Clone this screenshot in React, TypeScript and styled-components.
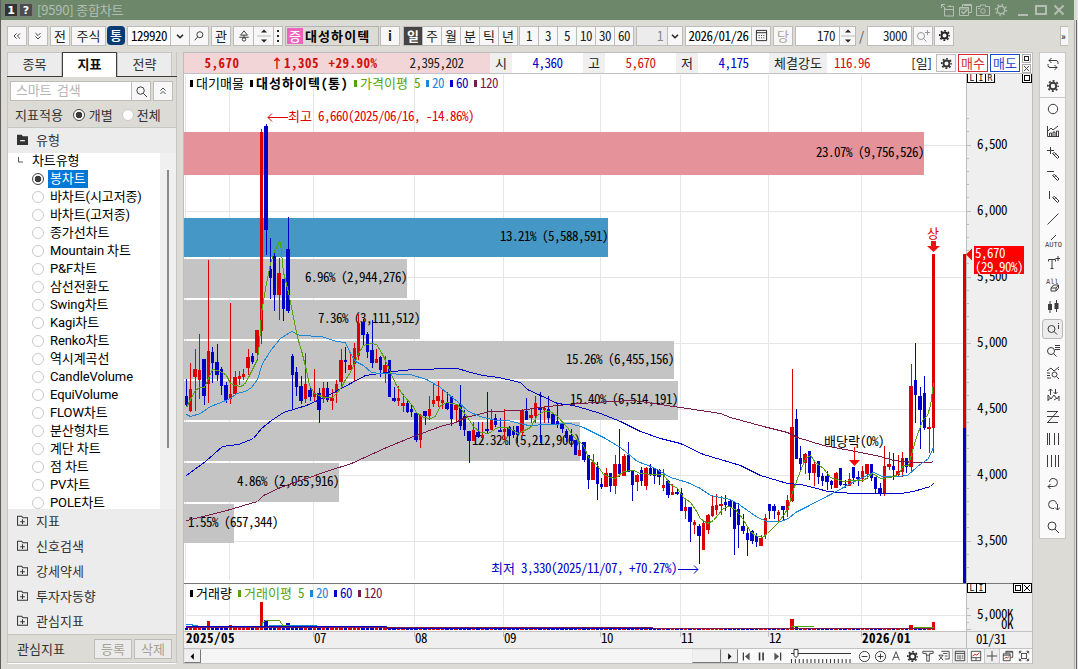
import React from "react";
import styled, { createGlobalStyle, css } from "styled-components";

const RED = "#dd0000";
const BLUE = "#0000c8";
const GREEN = "#55a20a";
const SKY = "#1c86d8";
const WINE = "#7a1a4c";

const GlobalStyle = createGlobalStyle`
    * {
        box-sizing: border-box;
    }
    body {
        margin: 0;
        overflow: hidden;
        font-family: "Noto Sans CJK KR", "Liberation Sans", sans-serif;
        font-size: 13px;
        line-height: 1;
        color: #000;
    }
`;

const Window = styled.div`
    display: flex;
    flex-direction: column;
    width: 1078px;
    height: 669px;
    background: #dcdbd6;
    border-left: 1px solid #5e5e5e;
    border-right: 1px solid #e6e6ea;
`;

const TitleBar = styled.div`
    display: flex;
    align-items: center;
    height: 20px;
    flex: none;
    margin-right: 3px;
    padding: 0 8px 0 3px;
    background: #6c8769;
    color: #b5beb2;
`;

const TitleBox = styled.div<{ $dark?: boolean }>`
    display: flex;
    align-items: center;
    justify-content: center;
    width: 14px;
    height: 14px;
    margin-right: 1px;
    background: ${p => (p.$dark ? "#333" : "#4c4c4c")};
    border: 1px solid #7d7d7d;
    color: #fff;
    font: bold 11px "DejaVu Sans", sans-serif;
`;

const Title = styled.div`
    flex: 1;
    margin: -2px 0 0 3px;
    letter-spacing: -0.2px;
    white-space: nowrap;
`;

const TitleIcons = styled.div`
    display: flex;
    align-items: center;
    gap: 4px;
    margin-left: 8px;
`;

const Toolbar = styled.div`
    display: flex;
    flex: none;
    height: 32px;
    padding: 6px 9px 0 6px;
`;

const Group = styled.div<{ $gap?: number }>`
    display: flex;
    flex: none;
    height: 20px;
    margin-right: ${p => p.$gap ?? 2}px;
    border: 1px solid #bdbcb9;
    background: #f7f7f7;
`;

const Cell = styled.div<{ $w: number; $bg?: string; $color?: string; $right?: boolean; $line?: boolean }>`
    display: flex;
    flex: none;
    align-items: center;
    justify-content: ${p => (p.$right ? "flex-end" : "center")};
    width: ${p => p.$w}px;
    padding: 0 ${p => (p.$right ? 4 : 0)}px 1px 0;
    background: ${p => p.$bg ?? "transparent"};
    color: ${p => p.$color ?? "#222"};
    border-left: ${p => (p.$line ? "1px solid #bdbcb9" : "0")};
    white-space: nowrap;
    overflow: hidden;
`;

const Digits = styled.span<{ $bold?: boolean }>`
    font-size: 13px;
    font-weight: ${p => (p.$bold ? 700 : 400)};
    font-feature-settings: "hwid";
    letter-spacing: ${p => (p.$bold ? 0.5 : -0.5)}px;
`;

const UnifiedButton = styled.div`
    flex: none;
    width: 18px;
    height: 19px;
    margin-right: 2px;
    border-radius: 4px;
    background: #063b73;
    color: #fff;
    font-weight: 500;
    line-height: 18px;
    text-align: center;
`;

const StockName = styled.div`
    display: flex;
    flex: none;
    align-items: center;
    width: 94px;
    height: 20px;
    margin: 0 1px 0 2px;
    padding: 0 0 1px 1px;
    border: 1px solid #b3b2ae;
    background: #dcdbd6;
    font-weight: 700;
    letter-spacing: 1.1px;
    white-space: nowrap;
`;

const MarginMark = styled.span`
    width: 16px;
    margin-right: 2px;
    background: #ef62bd;
    color: #fff;
    font-weight: 500;
    letter-spacing: 0;
    line-height: 16px;
    text-align: center;
`;

const Slash = styled.div`
    width: 11px;
    line-height: 20px;
    text-align: center;
    color: #555;
`;

const MoreTab = styled.div`
    width: 8px;
    height: 20px;
    margin-left: auto;
    border: 1px solid #bdbcb9;
    border-right: 0;
    background: #f7f7f7;
    font-size: 10px;
    line-height: 17px;
`;

const Body = styled.div`
    display: flex;
    flex: 1;
    padding-left: 6px;
    align-items: flex-start;
`;

/* left side panel */

const Side = styled.div`
    width: 170px;
    height: 612px;
    display: flex;
    flex-direction: column;
    margin-right: 6px;
    border-left: 1px solid #c6c6c4;
    border-right: 1px solid #c6c6c4;
    border-bottom: 1px solid #fff;
    color: #333;
`;

const Tabs = styled.div`
    display: flex;
    height: 25px;
    flex: none;
    margin: 0 -1px;
    border-bottom: 1px solid #3d3d3d;
`;

const Tab = styled.div<{ $active?: boolean }>`
    width: 55px;
    height: ${p => (p.$active ? 25 : 24)}px;
    background: ${p => (p.$active ? "#fff" : "#ececec")};
    border: 1px solid #c6c6c4;
    border-bottom: 0;
    line-height: 21px;
    text-align: center;
    ${p => p.$active && css`
        border-color: #3d3d3d;
        font-weight: 700;
        color: #111;
    `}
`;

const SearchRow = styled.div`
    display: flex;
    height: 20px;
    flex: none;
    margin: 4px 2px 0;
`;

const SearchInput = styled.div`
    width: 122px;
    padding-left: 5px;
    border: 1px solid #bdbcb9;
    background: #fff;
    color: #b5b5b5;
    line-height: 16px;
    word-spacing: 3px;
    letter-spacing: -0.2px;
`;

const SquareButton = styled.div<{ $ml?: number }>`
    display: flex;
    align-items: center;
    justify-content: center;
    width: 20px;
    height: 20px;
    margin-left: ${p => p.$ml ?? 0}px;
    border: 1px solid #bdbcb9;
    background: #f7f7f7;
    color: #333;
`;

const QuoteSetup = styled(SquareButton)`
    height: 18px;
    margin: 1px 2px 0 0;
`;

const ApplyRow = styled.div`
    display: flex;
    align-items: center;
    height: 27px;
    flex: none;
    padding: 1px 0 0 7px;
    border-bottom: 1px solid #c6c6c4;
    white-space: nowrap;
`;

const Radio = styled.span<{ $on?: boolean; $ml?: number; $mr?: number }>`
    flex: none;
    width: 12px;
    height: 12px;
    margin: 0 ${p => p.$mr ?? 6}px 0 ${p => p.$ml ?? 0}px;
    border: 1px solid ${p => (p.$on ? "#444" : "#c9c9c9")};
    border-radius: 50%;
    background: ${p => (p.$on ? "radial-gradient(circle, #3a3a3a 3px, #fff 3.6px)" : "#fff")};
`;

const SectionHead = styled.div`
    display: flex;
    align-items: center;
    gap: 8px;
    height: 25px;
    flex: none;
    padding: 0 0 2px 9px;
    background: #ececec;
`;

const ListBox = styled.div`
    display: flex;
    height: 356px;
    flex: none;
    overflow: hidden;
    background: #fff;
    color: #000;
`;

const List = styled.div`
    width: 152px;
`;

const ListItem = styled.div<{ $root?: boolean }>`
    display: flex;
    align-items: center;
    height: 18px;
    padding-left: ${p => (p.$root ? 10 : 24)}px;
    white-space: nowrap;
    &:first-child {
        margin-top: -1px;
    }
`;

const ItemText = styled.span<{ $on?: boolean }>`
    margin-left: -2px;
    padding: 0 2px;
    font-family: Roboto, "Noto Sans CJK KR", sans-serif;
    letter-spacing: -0.1px;
    line-height: 18px;
    background: ${p => (p.$on ? "#0078d7" : "transparent")};
    color: ${p => (p.$on ? "#fff" : "#000")};
`;

const ListScroll = styled.div`
    flex: 1;
    padding: 17px 0 0 7px;
    background: #f0f0f0;
`;

const ListThumb = styled.div`
    width: 2px;
    height: 278px;
    background: #8a8a8a;
`;

const FavoriteRow = styled.div`
    display: flex;
    flex: 1;
    align-items: center;
    padding: 0 4px 0 9px;
    border-top: 1px solid #c6c6c4;
    gap: 2px;
    border-bottom: 1px solid #c6c6c4;
`;

const FavoriteLabel = styled.div`
    flex: 1;
`;

const DisabledButton = styled.div`
    width: 38px;
    height: 20px;
    border: 1px solid #bdbcb9;
    background: #ebebeb;
    color: #a5a294;
    line-height: 18px;
    text-align: center;
`;

/* chart */

const Main = styled.div`
    width: 850px;
    height: 612px;
    display: flex;
    flex-direction: column;
    border: 1px solid #bdbcbf;
    border-bottom-color: #c4c4c4;
    background: #fff;
`;

const QuoteBar = styled.div`
    display: flex;
    height: 21px;
    flex: none;
    border-bottom: 1px solid #c2c2c6;
`;

const Quote = styled(Cell)`
    height: 20px;
    padding-bottom: 2px;
`;

const TradeButton = styled.div<{ $color: string }>`
    width: 30px;
    height: 18px;
    margin: 1px 2px 0 0;
    border: 1px solid ${p => p.$color};
    color: ${p => p.$color};
    background: #fff;
    line-height: 16px;
    text-align: center;
`;

const MiniStack = styled.div`
    display: flex;
    flex-direction: column;
    gap: 1px;
    padding-top: 1px;
    width: 10px;
`;

const Mini = styled.svg`
    width: 9px;
    height: 9px;
    border: 1px solid #aaa;
`;

const ChartSvg = styled.svg`
    display: block;
    flex: none;
    width: 848px;
    height: 575px;
`;

const ChartText = styled.text`
    font-family: "Noto Sans CJK KR", sans-serif;
    font-size: 13px;
    font-feature-settings: "hwid";
`;

const BottomBar = styled.div`
    display: flex;
    flex: 1;
    align-items: center;
    background: #fafafa;
    color: #333;
`;

const ScrollButton = styled.div<{ $w: number }>`
    display: flex;
    align-items: center;
    justify-content: center;
    width: ${p => p.$w}px;
    height: 14px;
    border: 1px solid #e8e8e8;
    border-right-color: #777;
    border-bottom-color: #777;
    background: #f0f0f0;
`;

const ScrollTrack = styled.div`
    display: flex;
    justify-content: flex-end;
    width: 520px;
    height: 14px;
    background: #f5f5f5;
`;

const BottomIcons = styled.div`
    display: flex;
    width: 294px;
    align-items: center;
`;

const IconCell = styled.div<{ $w?: number; $boxed?: boolean }>`
    display: flex;
    flex: none;
    align-items: center;
    justify-content: center;
    width: ${p => p.$w ?? 16}px;
    height: 14px;
    background: ${p => (p.$boxed ? "#eee" : "transparent")};
    border-left: ${p => (p.$boxed ? "1px solid #c4c4c4" : "0")};
    border-right: ${p => (p.$boxed ? "1px solid #c4c4c4" : "0")};
`;

/* right tools */

const Tools = styled.div`
    display: flex;
    flex-direction: column;
    width: 27px;
    height: 487px;
    margin-left: 6px;
    border: 1px solid #c8c8c8;
    background: #fafafa;
    color: #3c3c3c;
`;

const Tool = styled.div<{ $active?: boolean; $last?: boolean }>`
    display: flex;
    align-items: center;
    justify-content: center;
    height: ${p => (p.$active ? 20 : 22)}px;
    margin: ${p => (p.$active ? "1px 2px" : "0")};
    border: ${p => (p.$active ? "1px solid #b8b8b8" : "0")};
    border-radius: ${p => (p.$active ? 3 : 0)}px;
    background: ${p => (p.$active ? "#ececec" : "transparent")};
    ${p => p.$last && css`
        height: 23px;
        border-bottom: 1px solid #c8c8c8;
    `}
`;

const RightEdge = styled.div`
    align-self: stretch;
    width: 3px;
    margin: -32px 0 0 auto;
    border-left: 1px solid #b4b4b4;
    border-right: 1px solid #636363;
    background: #dcdbd6;
`;

const Icon = (props: { size?: number; w?: number; sw?: number; children: React.ReactNode }) => (
    <svg
        width={props.w ?? props.size ?? 14}
        height={props.size ?? 14}
        viewBox={`0 0 ${props.w ?? 14} 14`}
        fill="none"
        stroke="currentColor"
        strokeWidth={props.sw ?? 1}
    >
        {props.children}
    </svg>
);

const Gear = ({ size = 14 }: { size?: number }) => (
    <Icon size={size}>
        <circle cx="7" cy="7" r="3.2" strokeWidth="2" />
        <circle cx="7" cy="7" r="5.1" strokeWidth="1.8" strokeDasharray="2 2.005" strokeDashoffset="1" />
    </Icon>
);

const Lens = ({ size = 14 }: { size?: number }) => (
    <Icon size={size}><circle cx="6" cy="6" r="4" /><path d="M9 9l4 4" /></Icon>
);

const Chevron = () => <Icon size={12} sw={1.8}><path d="M3.500 5.500L7 9l3.500-3.500" /></Icon>;

const Spinner = () => (
    <Icon w={14} size={18}>
        <path d="M-3 7H17" stroke="#bdbcb9" />
        <path d="M4 3.500L7 .5l3 3zM4 10.500l3 3 3-3z" fill="currentColor" stroke="none" />
    </Icon>
);

const pen = "M6.500 7.500l2-1 4.500 4.500-1.500 1.500-4.500-4.500zM8.500 9l1.500-1.500";

const TOOL_ICONS: React.ReactNode[] = [
    <Icon><path d="M5.500 1L3 3.500 5.500 6M3 3.500h7q2 0 2 2v1.500M8.500 8L11 10.500 8.500 13M11 10.500H4q-2 0-2-2V7" /></Icon>,
    <Gear />,
    <Icon><circle cx="7" cy="7" r="4.700" /></Icon>,
    <Icon><path d="M1.500 2v10.500H13M3.500 12V9h2v3M7 12V8h2v4M10.500 12V7h2v5M2 7l3-3 2 2 5-4" /></Icon>,
    <Icon><path d="M1 4.500h7M4.500 1v7" /><path d={pen} /></Icon>,
    <Icon><path d="M1 3.500h7" /><path d={pen} /></Icon>,
    <Icon><path d="M3.500 1v8" /><path d={pen} /></Icon>,
    <Icon><path d="M1.500 12.500l11-11" /></Icon>,
    <Icon w={18}>
        <path d="M7 6l5-5" />
        <text x="1" y="13" fontSize="7" fontFamily="DejaVu Sans Mono" fill="currentColor" stroke="none">AUTO</text>
    </Icon>,
    <Icon><path d="M2.500 5.500v-2h7v2M6 4v8.500M4.500 12.500h3M12 0v5M9.500 2.500h5" /></Icon>,
    <Icon>
        <text x="0" y="5.5" fontSize="7" fontFamily="DejaVu Sans Mono" fill="currentColor" stroke="none">All</text>
        <path d="M5 10l2.500-3h5L10 10zM5 10v3h5v-3M10 13l2.500-3V7" />
    </Icon>,
    <Icon><path d="M4 1v12M10.500 0v12" /><path d="M2 4h4v6H2zM8.500 3h4v6h-4z" fill="currentColor" stroke="none" /></Icon>,
    <Icon><circle cx="5.500" cy="7" r="3.500" /><path d="M8 9.500l3 3M12.500 3v4M12.500 1v1" /></Icon>,
    <Icon><circle cx="5" cy="7" r="3.500" /><path d="M7.500 9.500l3 3M9 1.500h5M9 3.500h5M9 5.500h5" /></Icon>,
    <Icon><path d="M1 5l4-3 3 3 5-4M1 7h3M1 9.500h3M1 12h4M12 4l1-1" /><circle cx="8.500" cy="8.500" r="2.500" /><path d="M10.500 10.500l2.500 2.500" /></Icon>,
    <Icon><path d="M4.500 7V1M2.500 3l2-2 2 2M9.500 1v5M7.500 4l2 2 2-2M2 13V7l3 4 3-4 3 4 2-3v5M2 12l3-2M8 12l3-2" /></Icon>,
    <Icon><path d="M1 1.500h11M1 6.500h12M1 12.500h11M2 12L11 2" /></Icon>,
    <Icon><path d="M1.500 1v12M3.500 1v12M8.500 1v12M12.500 1v12" /></Icon>,
    <Icon><path d="M1.500 1v12M5.500 1v12M9.500 1v12M12.500 1v12" /></Icon>,
    <Icon><path d="M3.500 6a4 4 0 1 1 4 4.500H2M4.500 8L2 10.500 4.500 13" /></Icon>,
    <Icon><path d="M10.500 6a4 4 0 1 0-4 4.500H8M11.500 6v6M9 9.500l2.500 2.500L14 9.500" /></Icon>,
    <Lens />,
];

const CHART_TYPES = [
    "봉차트", "바차트(시고저종)", "바차트(고저종)", "종가선차트", "Mountain 차트", "P&F차트",
    "삼선전환도", "Swing차트", "Kagi차트", "Renko차트", "역시계곡선", "CandleVolume",
    "EquiVolume", "FLOW차트", "분산형차트", "계단 차트", "점 차트", "PV차트", "POLE차트",
];

const SECTIONS = ["지표", "신호검색", "강세약세", "투자자동향", "관심지표"];

// y, height, right edge, label, colour
const PROFILE: [number, number, number, string, string][] = [
    [132, 43, 924, "23.07% (9,756,526)", "#e5929a"],
    [218, 39, 608, "13.21% (5,588,591)", "#4597c5"],
    [259, 39, 407, "6.96% (2,944,276)", "#c4c4c4"],
    [300, 39, 420, "7.36% (3,111,512)", "#c4c4c4"],
    [341, 38, 674, "15.26% (6,455,156)", "#c4c4c4"],
    [381, 39, 678, "15.40% (6,514,191)", "#c4c4c4"],
    [422, 39, 580, "12.32% (5,212,906)", "#c4c4c4"],
    [463, 39, 339, "4.86% (2,055,916)", "#c4c4c4"],
    [504, 39, 234, "1.55% (657,344)", "#c4c4c4"],
];

// high, low, body top, body bottom, up
const CANDLES: number[][] = [
    [379,407,396,405,0],[363,412,389,411,1],[349,411,369,377,1],[334,399,370,380,1],[359,405,359,396,0],
    [260,403,351,384,1],[347,383,352,363,0],[344,381,362,375,0],[367,395,369,386,0],[382,403,385,400,0],
    [303,404,394,399,1],[371,395,377,394,1],[371,385,376,379,1],[369,380,374,377,1],[349,375,357,368,1],
    [353,364,356,362,0],[330,360,330,353,1],[129,344,132,331,1],[124,255,126,230,0],[238,299,269,278,0],
    [250,311,256,295,0],[258,320,273,295,1],[279,321,279,309,0],[217,313,249,311,0],[354,410,356,375,0],
    [367,396,372,387,0],[376,404,386,401,0],[353,403,384,399,1],[386,401,390,397,0],[369,401,393,397,1],
    [388,423,393,410,0],[382,403,388,399,1],[382,402,388,400,0],[389,410,398,401,1],[380,403,384,393,1],
    [349,389,360,382,1],[347,373,360,362,0],[354,370,365,370,1],[343,381,348,364,1],[314,360,323,356,1],
    [319,346,322,335,0],[332,358,334,352,0],[320,368,350,363,0],[349,363,359,363,1],[356,377,357,370,0],
    [356,383,365,373,1],[360,397,360,397,0],[387,402,398,401,0],[386,406,398,401,1],[394,412,403,406,1],
    [401,413,403,412,0],[404,417,409,412,0],[413,442,413,440,0],[414,448,415,440,1],[411,425,411,416,0],
    [396,420,409,416,1],[384,407,400,404,1],[381,407,396,401,1],[390,409,400,403,1],[392,410,403,409,0],
    [396,426,396,419,0],[404,421,405,410,1],[385,430,404,426,0],[410,436,416,430,0],[431,463,431,441,0],
    [422,441,430,441,1],[422,438,432,437,0],[422,438,435,438,1],[392,433,429,431,0],[409,430,419,430,1],
    [414,427,418,425,0],[418,432,430,432,0],[409,440,429,432,1],[426,445,427,436,0],[426,438,430,435,0],
    [426,443,426,435,0],[409,436,410,433,1],[398,420,411,420,0],[408,423,415,418,1],[396,423,403,416,1],
    [392,443,407,410,0],[406,423,408,410,1],[396,423,409,418,0],[414,425,414,425,0],[403,428,421,424,0],
    [424,433,424,429,0],[429,442,431,438,0],[429,447,435,441,0],[440,455,440,455,0],[442,456,450,456,1],
    [442,462,442,460,0],[455,489,455,480,0],[454,480,462,480,1],[462,500,467,484,0],[478,489,484,487,0],
    [468,487,473,487,1],[473,492,473,486,0],[455,494,464,486,1],[429,477,464,474,0],[454,476,456,476,1],
    [442,472,455,472,0],[470,501,470,485,0],[474,491,475,482,1],[467,486,470,481,0],[467,490,468,486,1],
    [464,476,468,474,0],[468,484,468,476,0],[469,485,470,477,0],[469,491,485,488,1],[480,498,481,495,0],
    [484,495,492,495,1],[488,495,492,494,0],[488,511,493,511,0],[500,519,507,511,1],[507,542,507,522,0],
    [520,534,522,525,1],[524,564,526,536,0],[521,550,523,550,1],[514,534,515,530,1],[495,517,506,516,1],
    [494,515,505,510,1],[496,515,504,506,1],[495,511,502,505,0],[500,517,501,507,0],[502,555,502,529,0],
    [503,548,509,525,0],[514,534,526,531,0],[527,556,533,540,0],[530,544,531,541,0],[533,547,536,542,0],
    [535,546,538,546,1],[514,539,518,535,1],[504,519,504,511,0],[504,519,506,511,0],[510,521,512,515,1],
    [506,520,506,510,0],[495,517,500,510,1],[369,502,427,501,1],[409,459,419,459,0],[446,472,458,464,0],
    [453,474,454,463,1],[451,480,451,473,0],[462,486,464,473,1],[461,484,461,477,0],[473,486,476,481,0],
    [471,490,476,482,0],[480,489,481,485,0],[472,488,473,488,1],[468,486,468,485,0],[480,488,484,485,0],
    [473,486,479,486,1],[467,484,467,478,0],[471,486,477,479,0],[466,482,471,479,1],[464,479,464,474,1],
    [464,481,464,478,0],[477,494,477,489,0],[483,496,488,493,0],[446,496,466,494,1],[452,470,464,467,1],
    [453,480,466,470,0],[455,477,471,475,1],[452,477,458,472,1],[458,473,458,467,0],[364,472,386,467,1],
    [343,423,380,395,0],[387,449,396,410,0],[376,430,393,428,0],[418,453,427,429,1],[254,453,254,428,1],
];

const AVERAGES: [string, string][] = [
    [WINE, "186,520 203,516 230,509 243,505 257,501 263,495 280,487 306,478 326,471 351,463 386,447 413,436 440,426 455,422 465,417 490,411 520,410 540,407 557,405 580,403 610,401 633,400 653,403 680,407 720,413 730,417 763,426 787,432 797,437 823,445 850,450 880,456 893,460 913,462 930,462 933,461"],
    [BLUE, "186,475 205,461 222,446 238,444 253,438 261,428 271,420 283,412 306,405 326,396 350,383 365,375 393,371 413,369 430,369 438,368 457,368 467,371 482,375 498,377 520,382 527,389 540,395 557,403 573,405 587,409 600,413 620,421 640,431 660,438 680,443 703,454 720,459 740,465 760,475 787,483 800,484 817,488 827,491 840,492 853,493 900,493 913,491 930,486 933,483"],
    [SKY, "186,414 190,416 200,413 210,406 218,403 230,398 236,393 245,391 251,387 257,379 262,363 271,349 280,338 291,331 300,335 321,336 336,341 345,342 350,353 355,361 363,365 371,372 380,373 410,374 426,379 440,387 453,398 457,401 468,411 480,416 495,420 507,420 528,425 547,424 570,423 583,427 603,437 620,447 637,461 653,467 670,477 687,482 700,488 710,495 720,497 730,499 740,505 757,517 767,521 780,521 788,518 795,512 807,506 830,494 843,487 852,482 860,478 873,472 882,476 897,476 907,475 917,466 928,458 933,447"],
    [GREEN, "186,407 190,399 195,390 199,387 204,387 208,378 212,369 217,370 222,372 226,375 230,383 235,385 240,386 244,384 248,377 252,369 257,359 259,343 261,312 266,283 270,263 274,251 279,241 280,243 283,272 288,292 292,312 297,337 301,350 306,370 309,385 314,393 319,395 323,397 332,397 336,393 341,387 345,379 350,372 354,363 358,353 363,345 370,343 376,344 381,352 385,360 390,372 396,385 403,395 412,405 416,412 423,417 430,418 435,416 440,405 447,402 457,404 465,414 473,426 480,432 488,433 497,427 507,427 518,433 530,427 537,415 543,411 550,411 557,416 567,427 573,436 583,445 588,457 597,465 603,474 610,477 615,478 623,471 633,470 640,473 653,474 663,474 670,484 677,488 683,497 690,502 695,509 700,518 707,523 713,520 717,515 723,508 728,506 735,509 742,518 750,531 755,535 762,537 767,533 777,523 783,515 788,507 792,492 797,478 801,468 805,458 810,455 815,462 823,468 830,477 843,481 853,480 863,480 872,473 880,478 890,477 898,474 903,465 908,465 915,440 922,420 927,415 930,405 933,383"],
];

const VOLUME_TOPS: { [i: number]: number } = {
    5: 621, 10: 625, 16: 627, 17: 602, 18: 620, 19: 626, 23: 623,
    137: 619, 138: 627, 164: 625, 169: 622,
};

const MONTHS: [number, string, boolean?][] = [
    [186, "2025/05", true], [314, "07"], [415, "08"], [504, "09"], [601, "10"],
    [681, "11"], [769, "12"], [862, "2026/01", true],
];

const GRID_X = [185, 229, 313, 414, 503, 600, 680, 768, 861];

// fixed pitch: a Hangul syllable takes two columns
const Label = (props: { x: number; y: number; fill?: string; bold?: boolean; end?: boolean; children: string }) => {
    const half = props.bold ? 7 : 6;
    const xs: number[] = [];
    let cur = props.x;
    for (const ch of props.children) {
        xs.push(cur);
        cur += ch > "\u3000" ? (props.bold ? 13 : 12) : half;
    }
    const shift = props.end ? cur - props.x : 0;
    return (
        <ChartText
            x={xs.map(v => v - shift).join(" ")}
            y={props.y}
            fill={props.fill ?? "#000"}
            fontWeight={props.bold ? 700 : 400}
        >
            {props.children}
        </ChartText>
    );
};

const left = (i: number) => Math.floor(185.05 + 4.42 * i);

const LegendMark = ({ x, y, fill }: { x: number; y: number; fill: string }) => (
    <rect x={x} y={y} width="3" height="7" fill={fill} />
);

const Boxes = ({ x, y, letters }: { x: number; y: number; letters: string }) => (
    <g>
        {letters.split("").map((c, i) => (
            <g key={c} transform={`translate(${x + i * 9} ${y})`}>
                <rect x="0.5" y="0.5" width="9" height="9" fill="#fff" stroke="#000" />
                {c === "□" && <rect x="2.5" y="2.500" width="5" height="5" fill="none" stroke="#000" />}
                {c === "×" && <path d="M2 2l6 6M8 2l-6 6" stroke="#000" />}
                {c !== "□" && c !== "×" && (
                    <text x="5" y="8" fontSize="8" textAnchor="middle" fontFamily="DejaVu Sans Mono">{c}</text>
                )}
            </g>
        ))}
    </g>
);

const Chart = () => (
    <ChartSvg viewBox="184 74 848 575">
        <g shapeRendering="crispEdges">
            <rect x="966" y="74" width="66" height="575" fill="#efefef" />
            <rect x="184" y="632" width="848" height="17" fill="#efefef" />
            {GRID_X.map(x => <path key={x} d={`M${x + 0.5} 75V580M${x + 0.5} 584V631`} stroke="#e6e6e6" />)}
            {[145, 211, 277, 343, 409, 475, 541, 615].map(y => <path key={y} d={`M186 ${y + 0.5}H966`} stroke="#e6e6e6" />)}
            {PROFILE.map(([y, h, r, , fill]) => <rect key={y} x="184" y={y} width={r - 184} height={h} fill={fill} />)}
        </g>
        {PROFILE.map(([y, , r, label]) => (
            <Label key={y} x={y === 504 ? 188 : r} y={y === 132 ? 157 : y + 23} end={y !== 504}>{label}</Label>
        ))}
        <g shapeRendering="crispEdges">
            {CANDLES.map(([hi, lo, top, bottom, up], i) => {
                const x = left(i);
                const w = left(i + 1) - x - 1;
                const fill = up ? RED : BLUE;
                const vTop = VOLUME_TOPS[i] ?? 628;
                return (
                    <g key={i} fill={fill}>
                        <rect x={x + Math.floor(w / 2)} y={hi} width="1" height={lo - hi} />
                        <rect x={x} y={top} width={w} height={bottom - top} />
                        <rect x={x} y={vTop} width={w} height={630 - vTop} />
                    </g>
                );
            })}
            {AVERAGES.map(([color, points]) => (
                <polyline key={color} points={points} transform="translate(.5 .5)" fill="none" stroke={color} />
            ))}
            <g fill="none">
                <path d="M186 624.500h6v1h6M269 625.500h48M317 626.500h30" stroke={SKY} />
                <path d="M186 626.500h201M387 628.500H934" stroke={BLUE} />
                <path d="M186 627.500h467M653 628.500H934" stroke={WINE} />
                <path d="M262.500 626v-3l3-2.500h14l3 4.500h4M791 626.500h23M914 627.500h20" stroke={GREEN} />
            </g>
            <path d="M966.500 74V649" stroke="#bdbdbd" />
            <path d="M184 583.500h848" stroke="#777" />
            <path d="M184 631.500h848M184 648.500h848" stroke="#c2c2c2" />
            {Array.from({ length: 35 }, (_, i) => (
                <path key={i} d={`M967 ${Math.floor(118.7 + i * 13.2) + 0.5}h${i % 5 === 2 ? 4 : 2}`} stroke="#bdbdbd" />
            ))}
            <path d="M967 608.500h2M967 615.500h4M967 622.500h2M967 629.500h4" stroke="#bdbdbd" />
            <rect x="963" y="254" width="3" height="174" fill={RED} />
            <rect x="963" y="428" width="3" height="155" fill={BLUE} />
        </g>

        <LegendMark x={190} y={80} fill="#000" />
        <Label x={196} y={88}>대기매물</Label>
        <LegendMark x={250} y={80} fill="#000" />
        <Label x={256} y={88} bold>대성하이텍(통)</Label>
        <LegendMark x={354} y={80} fill={GREEN} />
        <Label x={360} y={88} fill={GREEN}>가격이평 5</Label>
        <LegendMark x={426} y={80} fill={SKY} />
        <Label x={432} y={88} fill={SKY}>20</Label>
        <LegendMark x={450} y={80} fill={BLUE} />
        <Label x={456} y={88} fill={BLUE}>60</Label>
        <LegendMark x={474} y={80} fill={WINE} />
        <Label x={480} y={88} fill={WINE}>120</Label>

        <path d="M288 117.500H268M272 113.500l-4 4 4 4" fill="none" stroke={RED} />
        <Label x={288} y={121} fill={RED}>최고 6,660(2025/06/16, -14.86%)</Label>
        <Label x={491} y={573} fill={BLUE}>최저 3,330(2025/11/07, +70.27%)</Label>
        <path d="M678 569.500h20M694 565.500l4 4-4 4" fill="none" stroke={BLUE} />
        <Label x={824} y={446}>배당락(0%)</Label>
        <path d="M854.500 447v15" stroke="#ff0000" />
        <path d="M849 460h11l-5.500 6z" fill="#ff0000" />
        <Label x={927} y={238} fill={RED}>상</Label>
        <path d="M931 241h5v5h4l-6.500 6-6.500-6h4z" fill="#ee1111" />

        {["6,500", "6,000", "5,500", "5,000", "4,500", "4,000", "3,500"].map((p, i) => (
            <Label key={p} x={977} y={149 + i * 66}>{p}</Label>
        ))}
        <path d="M966 254.500l6-6v12z" fill="#ff0000" />
        <rect x="974" y="246" width="50" height="28" fill="#ff0000" />
        <Label x={975} y={258} fill="#fff">5,670</Label>
        <Label x={975} y={272} fill="#fff">(29.90%)</Label>
        <Boxes x={967} y={73} letters="LIR" />
        <Boxes x={1022} y={73} letters="□" />
        <Boxes x={967} y={583} letters="LI" />
        <Boxes x={1013} y={583} letters="□×" />

        <LegendMark x={190} y={590} fill="#000" />
        <Label x={196} y={598}>거래량</Label>
        <LegendMark x={238} y={590} fill={GREEN} />
        <Label x={244} y={598} fill={GREEN}>거래이평 5</Label>
        <LegendMark x={310} y={590} fill={SKY} />
        <Label x={316} y={598} fill={SKY}>20</Label>
        <LegendMark x={334} y={590} fill={BLUE} />
        <Label x={340} y={598} fill={BLUE}>60</Label>
        <LegendMark x={358} y={590} fill={WINE} />
        <Label x={364} y={598} fill={WINE}>120</Label>
        <Label x={977} y={619}>5,000K</Label>
        <Label x={1001} y={629}>0K</Label>
        {MONTHS.map(([x, label, bold]) => <Label key={x} x={x} y={643} bold={bold}>{label}</Label>)}
        {GRID_X.slice(2).map(x => <path key={x} d={`M${x + 0.5} 632v5`} stroke="#bbb" />)}
        <Label x={976} y={644}>01/31</Label>
    </ChartSvg>
);

const SidePanel = () => (
    <Side>
        <Tabs>
            <Tab>종목</Tab>
            <Tab $active>지표</Tab>
            <Tab>전략</Tab>
        </Tabs>
        <SearchRow>
            <SearchInput>스마트 검색</SearchInput>
            <SquareButton $ml={-1}><Lens size={13} /></SquareButton>
            <SquareButton $ml={2}><Icon size={12}><path d="M4 6.500l3-3 3 3M4 10.500l3-3 3 3" /></Icon></SquareButton>
        </SearchRow>
        <ApplyRow>
            지표적용
            <Radio $on $ml={10} $mr={4} />개별
            <Radio $ml={9} $mr={3} />전체
        </ApplyRow>
        <SectionHead>
            <Icon size={11}><path d="M0 1h6l1.500 2H14v11H0z" fill="#333" stroke="none" /><path d="M4 8.500h6" stroke="#fff" strokeWidth="1.500" /></Icon>
            유형
        </SectionHead>
        <ListBox>
            <List>
                <ListItem $root>
                    <Icon size={14}><path d="M.5 3v5H5" stroke="#555" /></Icon>
                    <ItemText>차트유형</ItemText>
                </ListItem>
                {CHART_TYPES.map((name, i) => (
                    <ListItem key={name}>
                        <Radio $on={i === 0} />
                        <ItemText $on={i === 0}>{name}</ItemText>
                    </ListItem>
                ))}
            </List>
            <ListScroll><ListThumb /></ListScroll>
        </ListBox>
        {SECTIONS.map(name => (
            <SectionHead key={name}>
                <Icon size={11}><path d="M.7 1.500H6l1.500 2h6V13H.7zM7 5.500v6M4 8.500h6" strokeWidth="1.300" /></Icon>
                {name}
            </SectionHead>
        ))}
        <FavoriteRow>
            <FavoriteLabel>관심지표</FavoriteLabel>
            <DisabledButton>등록</DisabledButton>
            <DisabledButton>삭제</DisabledButton>
        </FavoriteRow>
    </Side>
);

const TopToolbar = () => (
    <Toolbar>
        <Group $gap={1}><Cell $w={18}><Icon size={12}><path d="M6.500 4l-3 3 3 3M10.500 4l-3 3 3 3" /></Icon></Cell></Group>
        <Group><Cell $w={18}><Icon size={12}><path d="M4 3.500l3 3 3-3M4 7.500l3 3 3-3" /></Icon></Cell></Group>
        <Group $gap={1}><Cell $w={18}>전</Cell></Group>
        <Group $gap={1}><Cell $w={33}>주식</Cell></Group>
        <UnifiedButton>통</UnifiedButton>
        <Group>
            <Cell $w={42} $bg="#fff" $color="#000"><Digits>129920</Digits></Cell>
            <Cell $w={19} $line><Chevron /></Cell>
            <Cell $w={19} $line><Icon size={12}><circle cx="8" cy="5.500" r="3.500" /><path d="M5.500 8L2 12" /></Icon></Cell>
        </Group>
        <Group><Cell $w={18}>관</Cell></Group>
        <Group $gap={0}>
            <Cell $w={19}><Icon size={12}><path d="M7 1L3 6h8zM1.500 8.500h11M7 6v2" /><circle cx="7" cy="11" r="2" /></Icon></Cell>
            <Cell $w={20} $line><Spinner /></Cell>
            <Cell $w={9} $line><Icon w={4}><path d="M2 1v2M2 6v2M2 11v2" strokeWidth="2" /></Icon></Cell>
        </Group>
        <StockName><MarginMark>증</MarginMark>대성하이텍</StockName>
        <Group $gap={3}><Cell $w={18}><b>i</b></Cell></Group>
        <Group $gap={1}>
            <Cell $w={18} $bg="#454545" $color="#fff"><b>일</b></Cell>
            {["주", "월", "분", "틱", "년"].map(t => <Cell key={t} $w={19} $line>{t}</Cell>)}
        </Group>
        <Group>
            {["1", "3", "5", "10", "30", "60"].map((t, i) => (
                <Cell key={t} $w={i ? 19 : 18} $line={i > 0}><Digits>{t}</Digits></Cell>
            ))}
        </Group>
        <Group>
            <Cell $w={30} $bg="#ececec" $color="#888" $right><Digits>1</Digits></Cell>
            <Cell $w={15} $line><Chevron /></Cell>
        </Group>
        <Group>
            <Cell $w={65} $bg="#fff" $color="#000"><Digits>2026/01/26</Digits></Cell>
            <Cell $w={19} $line><Icon size={13}><path d="M1.500 1.500h11v11h-11zM1.500 4h11M4 7h1m1.500 0h1m1.500 0h1M4 9.500h1m1.500 0h1m1.500 0h1" /></Icon></Cell>
        </Group>
        <Group><Cell $w={18} $color="#aaa797">당</Cell></Group>
        <Group $gap={0}>
            <Cell $w={43} $bg="#fff" $color="#222" $right><Digits>170</Digits></Cell>
            <Cell $w={16} $line><Spinner /></Cell>
        </Group>
        <Slash>/</Slash>
        <Group $gap={1}><Cell $w={43} $bg="#fff" $right><Digits>3000</Digits></Cell></Group>
        <Group $gap={1}><Cell $w={18} $color="#999"><Icon><circle cx="5" cy="7" r="3.500" /><path d="M7.500 9.500l3 3M11.500 1v5M9 3.500h5" /></Icon></Cell></Group>
        <Group><Cell $w={18}><Gear size={13} /></Cell></Group>
        <MoreTab>»</MoreTab>
    </Toolbar>
);

const QuoteRow = () => (
    <QuoteBar>
        <Quote $w={76} $bg="#f2d6d7" $color="#d01010"><Digits $bold>5,670</Digits></Quote>
        <Quote $w={63} $bg="#f2d6d7" $color="#d01010" $right><Digits $bold>↑1,305</Digits></Quote>
        <Quote $w={60} $bg="#f2d6d7" $color="#d01010"><Digits $bold>+29.90%</Digits></Quote>
        <Quote $w={107} $bg="#f2d6d7"><Digits>2,395,202</Digits></Quote>
        <Quote $w={22} $bg="#efefef">시</Quote>
        <Quote $w={71} $color={BLUE}><Digits>4,360</Digits></Quote>
        <Quote $w={22} $bg="#efefef">고</Quote>
        <Quote $w={71} $color="#d01010"><Digits>5,670</Digits></Quote>
        <Quote $w={22} $bg="#efefef">저</Quote>
        <Quote $w={71} $color={BLUE}><Digits>4,175</Digits></Quote>
        <Quote $w={58} $bg="#efefef">체결강도</Quote>
        <Quote $w={50} $color="#d01010"><Digits>116.96</Digits></Quote>
        <Quote $w={59} $right>[일]</Quote>
        <QuoteSetup><Gear size={13} /></QuoteSetup>
        <TradeButton $color="#d03030">매수</TradeButton>
        <TradeButton $color="#1c48d0">매도</TradeButton>
        <MiniStack>
            <Mini viewBox="0 0 7 7"><rect x="1.5" y="1.5" width="4" height="4" fill="none" stroke="#222" /></Mini>
            <Mini viewBox="0 0 7 7"><path d="M1 1l5 5M6 1L1 6" stroke="#444" /></Mini>
        </MiniStack>
    </QuoteBar>
);

const BottomTools = () => (
    <BottomBar>
        <ScrollButton $w={17}><Icon size={9}><path d="M9 2v10L4 7z" fill="#000" stroke="none" /></Icon></ScrollButton>
        <ScrollTrack><ScrollButton $w={29} /></ScrollTrack>
        <ScrollButton $w={17}><Icon size={9}><path d="M5 2v10l5-5z" fill="#000" stroke="none" /></Icon></ScrollButton>
        <BottomIcons>
            <IconCell><Icon size={11}><path d="M3 2v10" strokeWidth="1.500" /><path d="M11 2v10L5 7z" fill="#555" stroke="none" /></Icon></IconCell>
            <IconCell $w={15}><Icon size={11}><path d="M4.500 2v10M9 2v10" strokeWidth="2" /></Icon></IconCell>
            <IconCell><Icon size={11}><path d="M11 2v10" strokeWidth="1.500" /><path d="M3 2v10l6-5z" fill="#555" stroke="none" /></Icon></IconCell>
            <IconCell $w={71}>
                <Icon w={62}>
                    <path d="M1 4.500h60" />
                    <path d="M1 12h60" strokeWidth="4" strokeDasharray="1 2.900" />
                    <path d="M4 .5h4v6L6 8.500l-2-2z" fill="#fff" />
                </Icon>
            </IconCell>
            <IconCell><Icon size={13}><circle cx="7" cy="7" r="5.500" /><path d="M4 7h6" /></Icon></IconCell>
            <IconCell><Icon size={13}><circle cx="7" cy="7" r="5.500" /><path d="M4 7h6M7 4v6" /></Icon></IconCell>
            <IconCell><Icon size={12}><path d="M3 12l4-10 4 10M4.500 8.500h5" /></Icon></IconCell>
            <IconCell><Gear size={13} /></IconCell>
            <IconCell><Icon size={12}><path d="M1 4V1.500h12V4H9v2H5V4zM5.500 6v7h3V6" /></Icon></IconCell>
            <IconCell><Icon size={12}><path d="M4 1.500h9v9H8M6 4h5M8 7h3M1 6l5 6M6 6l-5 6M1 6h5" /></Icon></IconCell>
            <IconCell $boxed><Icon size={12}><path d="M1.500 1.500h11v11h-11zM1.500 4h11M7 6v5M3.500 7h2M3.500 9.500h2M9 7h2M9 9.500h2" /></Icon></IconCell>
            <IconCell><Icon size={12}><path d="M1.500 1.500h11v11h-11zM1.500 9h11M7 9v3" /><path d="M3 7l3-2 2 1 3-3" stroke="#c00" /></Icon></IconCell>
            <IconCell $boxed><Icon size={12}><path d="M7 1v12M1 7h12" /></Icon></IconCell>
            <IconCell><Icon size={12}><path d="M4.500 4V1.500h8v7H10M1.500 4.500h8v8h-8zM1.500 6h8M4.500 2.500h8" /><path d="M3 10l2-1.500 1 1L8 8" stroke="#c00" /></Icon></IconCell>
            <IconCell><Icon size={12}><path d="M1.500 4V1.500H4M10 1.500h2.500V4M12.500 10v2.500H10M4 12.500H1.500V10M4 4h6v6H4zM2 2l2 2M12 2l-2 2M12 12l-2-2M2 12l2-2" /></Icon></IconCell>
        </BottomIcons>
    </BottomBar>
);

export default function App() {
    return (
        <>
            <GlobalStyle />
            <Window>
                <TitleBar>
                    <TitleBox $dark>1</TitleBox>
                    <TitleBox>?</TitleBox>
                    <Title>[9590] 종합차트</Title>
                    <TitleIcons>
                        <Icon><path d="M4.500 5v8h9V3.500h-6M5 6.500h8M1 1.500h4M1.500 1v4M1.500 1.500l4 4M10 2v2" /></Icon>
                        <Icon><path d="M4.500 4V1.500h9v8H11M1.500 4.500h9v8h-9zM2 6h8M6 2.500h7" /><path d="M3.500 8.500l2 2 4-4" strokeWidth="1.500" /></Icon>
                        <Icon><path d="M.5 3.500h4V2h5v1.500h4v9H.5zM2 5.500h2" /><circle cx="7" cy="8" r="2.300" /></Icon>
                        <Icon><circle cx="7" cy="7" r="3.700" strokeWidth="1.500" /><circle cx="7" cy="7" r="5.400" strokeWidth="1.600" strokeDasharray="1.500 2.740" /></Icon>
                    </TitleIcons>
                    <TitleIcons>
                        <Icon sw={2}><path d="M2 12h10" /></Icon>
                        <Icon sw={2}><path d="M2 3h10v8H2z" /></Icon>
                        <Icon sw={2}><path d="M2.500 2.500l9 9M11.500 2.500l-9 9" /></Icon>
                    </TitleIcons>
                </TitleBar>
                <TopToolbar />
                <Body>
                    <SidePanel />
                    <Main>
                        <QuoteRow />
                        <Chart />
                        <BottomTools />
                    </Main>
                    <Tools>
                        {TOOL_ICONS.map((icon, i) => (
                            <Tool key={i} $active={i === 12} $last={i === 1}>{icon}</Tool>
                        ))}
                    </Tools>
                    <RightEdge />
                </Body>
            </Window>
        </>
    );
}
